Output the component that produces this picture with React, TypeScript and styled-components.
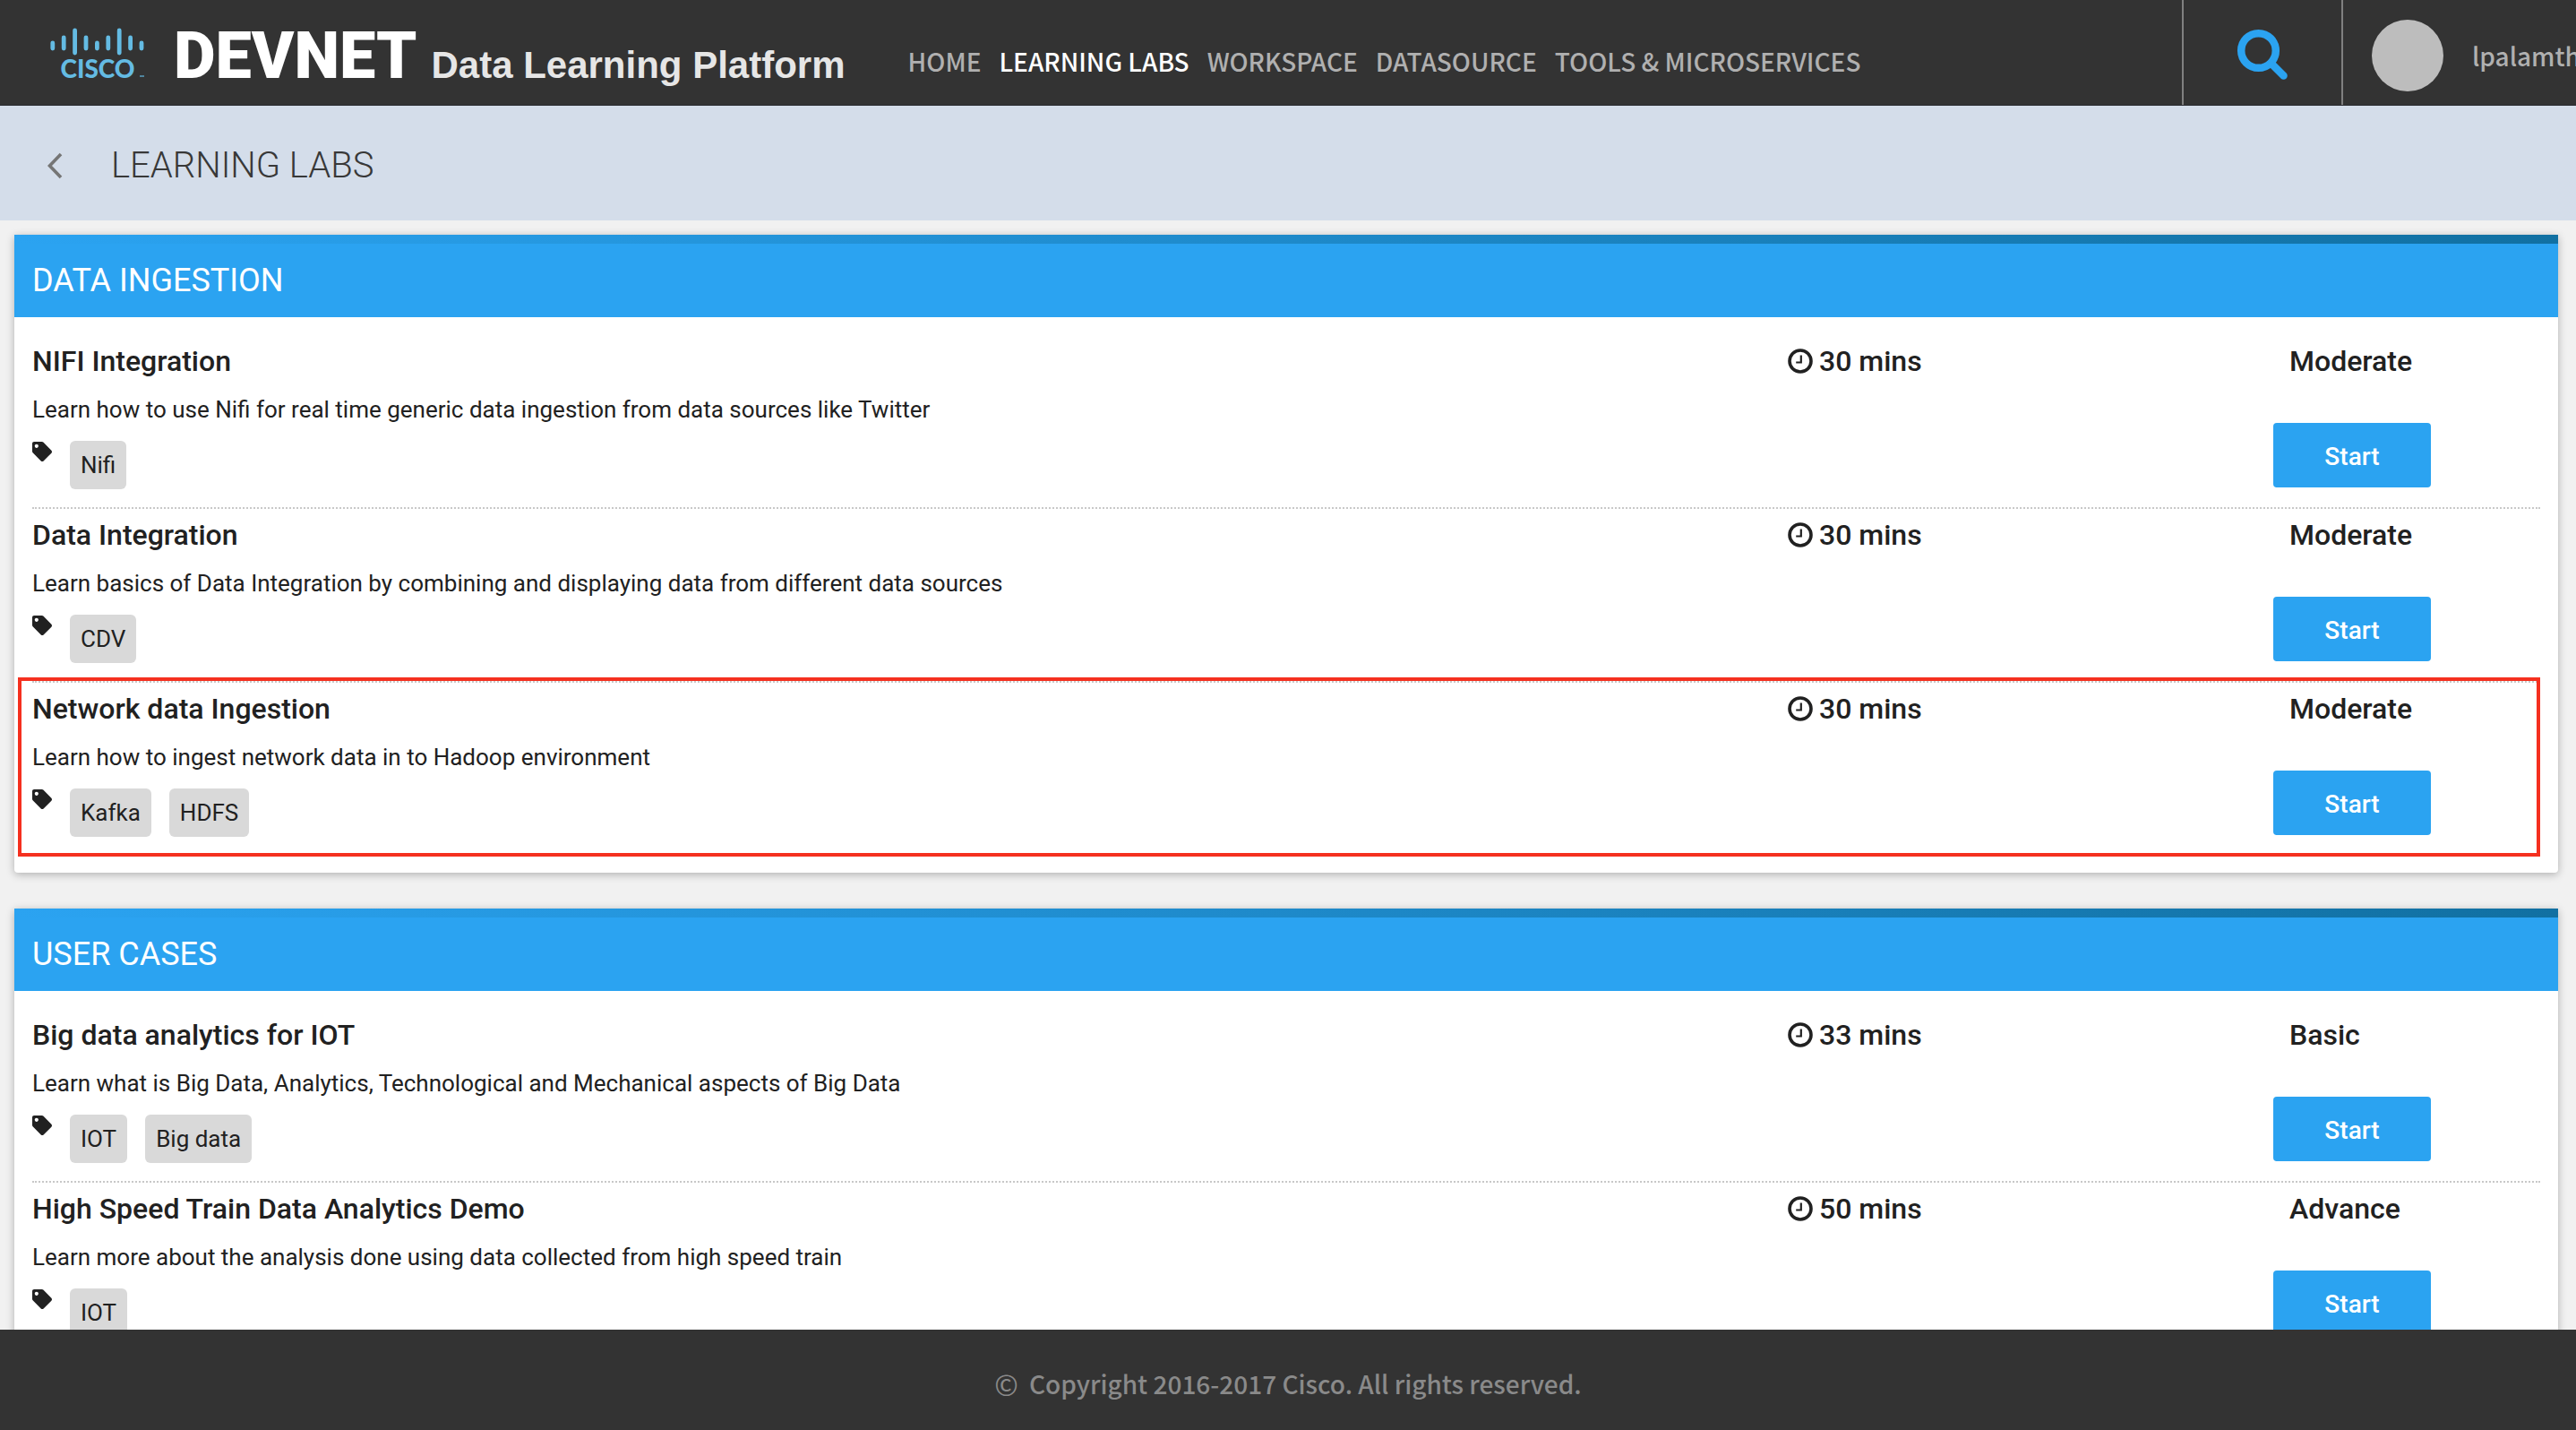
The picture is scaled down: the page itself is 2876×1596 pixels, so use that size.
import React from 'react';
import styled, { createGlobalStyle } from 'styled-components';
import { FaTag } from 'react-icons/fa';

const roboto = 'Roboto, "Liberation Sans", sans-serif';
const source = '"Noto Sans CJK JP", "Noto Sans", sans-serif';
const blue = '#2ba3f1';

const GlobalStyle = createGlobalStyle`
  * { box-sizing: border-box; }
  html, body, #root { height: 100%; }
  body { margin: 0; background: #f1f1f1; color: #212121; font-family: ${roboto}; }
  h1, h2, h3, p, ul { margin: 0; padding: 0; }
  ul { list-style: none; }
  button { border: 0; padding: 0; background: none; font-family: inherit; cursor: pointer; }
  a { color: inherit; text-decoration: none; }
`;

const Page = styled.div`
  display: flex;
  flex-direction: column;
  height: 100vh;
  overflow: hidden;
`;

const Header = styled.header`
  display: flex;
  flex: none;
  height: 118px;
  overflow: hidden;
  background: #333;
  border-bottom: 1px solid #2b2b30;
  white-space: nowrap;
`;

const Brand = styled.a`
  display: flex;
  align-items: baseline;
  padding: 21px 0 0 56px;
`;

const CiscoMark = styled.svg`
  width: 106px;
  height: 56px;
  margin-right: 32px;
  overflow: visible;
  color: #64bbe3;
`;

const CiscoName = styled.text`
  font: 900 28px Lato, sans-serif;
  text-anchor: middle;
`;

const DevNet = styled.span`
  margin-right: 16px;
  color: #fff;
  font: 900 72px/84px ${roboto};
`;

const Product = styled.span`
  color: #e6e6e6;
  font: 700 42px/48px "Liberation Sans", Arial, sans-serif;
`;

const Nav = styled.nav`
  display: flex;
  flex: 1;
  gap: 20px;
  padding: 47px 0 0 70px;
`;

const NavLink = styled.a<{ $active?: boolean }>`
  color: ${(p) => (p.$active ? '#fff' : '#b0b0b0')};
  font: 500 28px/42px ${source};
`;

const SearchButton = styled.button`
  display: flex;
  flex: none;
  justify-content: center;
  width: 180px;
  padding-top: 32px;
  border: solid #808080;
  border-width: 0 2px;
`;

const User = styled.div`
  display: flex;
  flex: none;
  gap: 32px;
  width: 260px;
  padding: 22px 0 0 32px;
`;

const Avatar = styled.div`
  flex: none;
  width: 80px;
  height: 80px;
  border-radius: 50%;
  background: #bdbdbd;
`;

const UserName = styled.span`
  color: #b0b0b0;
  font: 500 28px/80px ${source};
`;

const TitleBar = styled.div`
  display: flex;
  flex: none;
  align-items: center;
  gap: 48px;
  height: 128px;
  padding: 6px 46px 0;
  background: #d4ddea;
`;

const BackButton = styled.button`
  display: flex;
  justify-content: center;
  width: 30px;
`;

const PageTitle = styled.h1`
  color: #383838;
  font: 300 40px/48px ${roboto};
`;

const Main = styled.main`
  display: flex;
  flex: 1;
  flex-direction: column;
  gap: 40px;
  min-height: 0;
  padding: 16px 20px 0 16px;
  overflow: hidden;
`;

const Card = styled.section`
  flex: none;
  padding-bottom: 20px;
  border-radius: 0 0 4px 4px;
  background: #fff;
  box-shadow: 0 2px 10px rgba(0, 0, 0, 0.28);
`;

const CardStrip = styled.div`
  height: 10px;
  background: linear-gradient(90deg, ${blue}, #1170a2);
`;

const CardTitle = styled.h2`
  padding: 20px;
  background: ${blue};
  color: #fff;
  font: 400 36px/42px ${roboto};
`;

const LabList = styled.ul`
  padding: 20px 20px 0;
`;

const Lab = styled.li`
  position: relative;
  display: grid;
  grid-template-columns: 1fr 542px 298px;
  align-items: start;
  padding-bottom: 20px;
  border-bottom: 2px dotted #c8c8c8;

  &:last-child { border-bottom: 0; }
`;

const Highlight = styled.div`
  position: absolute;
  inset: -6px 0 -2px -16px;
  border: 4px solid #f5301f;
  pointer-events: none;
`;

const LabTitle = styled.h3`
  padding-top: 10px;
  font: 500 32px/38px ${roboto};
`;

const Description = styled.p`
  padding: 20px 0;
  font: 400 26px/30px ${roboto};
`;

const Tags = styled.div`
  display: flex;
  gap: 20px;
`;

const TagIcon = styled(FaTag)`
  width: 22px;
  height: 24px;
`;

const Tag = styled.span`
  padding: 0 12px;
  border-radius: 6px;
  background: #d9d9d9;
  font: 400 26px/54px ${roboto};
`;

const Fact = styled.p`
  display: flex;
  align-items: center;
  gap: 7px;
  padding-top: 10px;
  font: 500 32px/38px ${roboto};
`;

const Level = styled(Fact)`
  padding-left: 18px;
`;

const StartButton = styled.button`
  width: 176px;
  height: 72px;
  margin-top: 50px;
  padding-top: 4px;
  border-radius: 4px;
  background: ${blue};
  color: #fff;
  font: 500 28px/68px ${roboto};
`;

const Footer = styled.footer`
  display: flex;
  flex: none;
  justify-content: center;
  gap: 12px;
  height: 112px;
  padding-top: 39px;
  background: #333;
  color: #8a8a8a;
  font: 500 28px/42px ${source};
`;

const CopyrightSign = styled.span`
  font-size: 32px;
  font-weight: 400;
`;

interface LabData {
  title: string;
  text: string;
  tags: string[];
  mins: number;
  level: string;
  marked?: boolean;
}

const sections: { title: string; labs: LabData[] }[] = [
  {
    title: 'DATA INGESTION',
    labs: [
      { title: 'NIFI Integration', text: 'Learn how to use Nifi for real time generic data ingestion from data sources like Twitter', tags: ['Nifi'], mins: 30, level: 'Moderate' },
      { title: 'Data Integration', text: 'Learn basics of Data Integration by combining and displaying data from different data sources', tags: ['CDV'], mins: 30, level: 'Moderate' },
      { title: 'Network data Ingestion', text: 'Learn how to ingest network data in to Hadoop environment', tags: ['Kafka', 'HDFS'], mins: 30, level: 'Moderate', marked: true },
    ],
  },
  {
    title: 'USER CASES',
    labs: [
      { title: 'Big data analytics for IOT', text: 'Learn what is Big Data, Analytics, Technological and Mechanical aspects of Big Data', tags: ['IOT', 'Big data'], mins: 33, level: 'Basic' },
      { title: 'High Speed Train Data Analytics Demo', text: 'Learn more about the analysis done using data collected from high speed train', tags: ['IOT'], mins: 50, level: 'Advance' },
    ],
  },
];

const navItems = ['HOME', 'LEARNING LABS', 'WORKSPACE', 'DATASOURCE', 'TOOLS & MICROSERVICES'];

// Top and bottom of each bar of the bridge mark, left to right.
const bars = [[17, 23], [11, 23], [3, 28], [11, 23], [17, 23], [11, 23], [3, 28], [11, 23], [17, 23]];

const CiscoLogo = () => (
  <CiscoMark viewBox="0 0 106 56" fill="currentColor" aria-label="Cisco">
    {bars.map(([y1, y2], i) => (
      <line key={i} x1={2.8 + i * 12.4} x2={2.8 + i * 12.4} y1={y1} y2={y2} stroke="currentColor" strokeWidth="4.8" strokeLinecap="round" />
    ))}
    <CiscoName x="53" y="56">CISCO</CiscoName>
    <rect x="100" y="53" width="5" height="2" opacity="0.6" />
  </CiscoMark>
);

const SearchIcon = () => (
  <svg width="58" height="58" viewBox="0 0 58 58" fill="none" stroke={blue} strokeWidth="8.5" strokeLinecap="round">
    <circle cx="24.5" cy="24.5" r="19.3" />
    <path d="M39 39l13.5 13.5" />
  </svg>
);

const BackIcon = () => (
  <svg width="18" height="30" viewBox="0 0 18 30" fill="none" stroke="#757575" strokeWidth="3.6">
    <path d="M16 2L3.5 15 16 28" />
  </svg>
);

const ClockIcon = () => (
  <svg width="28" height="28" viewBox="0 0 28 28" fill="none" stroke="currentColor">
    <circle cx="14" cy="14" r="12" strokeWidth="3.6" />
    <path d="M14.8 7.5v8h-5.6" strokeWidth="2.2" />
  </svg>
);

const LabRow = ({ lab }: { lab: LabData }) => (
  <Lab>
    <div>
      <LabTitle>{lab.title}</LabTitle>
      <Description>{lab.text}</Description>
      <Tags>
        <TagIcon />
        {lab.tags.map((t) => <Tag key={t}>{t}</Tag>)}
      </Tags>
    </div>
    <Fact><ClockIcon />{lab.mins} mins</Fact>
    <div>
      <Level>{lab.level}</Level>
      <StartButton type="button">Start</StartButton>
    </div>
    {lab.marked && <Highlight />}
  </Lab>
);

export default function App() {
  return (
    <Page>
      <GlobalStyle />
      <Header>
        <Brand href="#">
          <CiscoLogo />
          <DevNet>DEVNET</DevNet>
          <Product>Data Learning Platform</Product>
        </Brand>
        <Nav>
          {navItems.map((n) => <NavLink key={n} href="#" $active={n === 'LEARNING LABS'}>{n}</NavLink>)}
        </Nav>
        <SearchButton type="button" aria-label="Search"><SearchIcon /></SearchButton>
        <User>
          <Avatar />
          <UserName>lpalamth</UserName>
        </User>
      </Header>
      <TitleBar>
        <BackButton type="button" aria-label="Back"><BackIcon /></BackButton>
        <PageTitle>LEARNING LABS</PageTitle>
      </TitleBar>
      <Main>
        {sections.map((s) => (
          <Card key={s.title}>
            <CardStrip />
            <CardTitle>{s.title}</CardTitle>
            <LabList>
              {s.labs.map((lab) => <LabRow key={lab.title} lab={lab} />)}
            </LabList>
          </Card>
        ))}
      </Main>
      <Footer>
        <CopyrightSign>©</CopyrightSign>
        <span>Copyright 2016-2017 Cisco. All rights reserved.</span>
      </Footer>
    </Page>
  );
}
